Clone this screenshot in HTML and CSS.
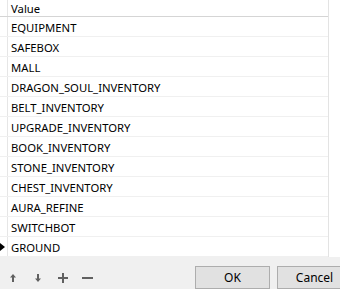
FILE: index.html
```html
<!DOCTYPE html>
<html>
<head>
    <link rel="stylesheet" href="styles.css">
</head>

<body>
    <div class="panel">
        <div class="grid">
            <div class="row head">
                <div class="marker"></div>
                <div class="cell">Value</div>
            </div>
            <div class="row"><div class="marker"></div><div class="cell">EQUIPMENT</div></div>
            <div class="row"><div class="marker"></div><div class="cell">SAFEBOX</div></div>
            <div class="row"><div class="marker"></div><div class="cell">MALL</div></div>
            <div class="row"><div class="marker"></div><div class="cell">DRAGON_SOUL_INVENTORY</div></div>
            <div class="row"><div class="marker"></div><div class="cell">BELT_INVENTORY</div></div>
            <div class="row"><div class="marker"></div><div class="cell">UPGRADE_INVENTORY</div></div>
            <div class="row"><div class="marker"></div><div class="cell">BOOK_INVENTORY</div></div>
            <div class="row"><div class="marker"></div><div class="cell">STONE_INVENTORY</div></div>
            <div class="row"><div class="marker"></div><div class="cell">CHEST_INVENTORY</div></div>
            <div class="row"><div class="marker"></div><div class="cell">AURA_REFINE</div></div>
            <div class="row"><div class="marker"></div><div class="cell">SWITCHBOT</div></div>
            <div class="row current"><div class="marker"><span class="arrow"></span></div><div class="cell">GROUND</div></div>
        </div>
    </div>

    <div class="toolbar">
        <div class="tools">
            <!-- move up / move down / add / remove -->
            <span class="tool">
                <svg width="6" height="8" viewBox="0 0 6 8"><path d="M3 0 L6 3.5 H4 V8 H2 V3.5 H0 Z" fill="#606060"/></svg>
            </span>
            <span class="tool">
                <svg width="6" height="8" viewBox="0 0 6 8"><path d="M3 8 L6 4.5 H4 V0 H2 V4.5 H0 Z" fill="#606060"/></svg>
            </span>
            <span class="tool">
                <svg width="10" height="10" viewBox="0 0 10 10"><path d="M0 5 H10 M5 0 V10" stroke="#606060" stroke-width="2"/></svg>
            </span>
            <span class="tool">
                <svg width="11" height="10" viewBox="0 0 11 10"><path d="M0 5 H11" stroke="#606060" stroke-width="2"/></svg>
            </span>
        </div>
        <div class="buttons">
            <button class="btn">OK</button>
            <button class="btn">Cancel</button>
        </div>
    </div>
</body>

</html>
```

FILE: styles.css
```css
body{
    margin: 0;
    width: 340px;
    height: 289px;
    overflow: hidden;
    font-family: "Noto Sans", "Liberation Sans", sans-serif;
    font-size: 11.3px;
    color: #000;
    background-color: #f0f0f0;
}
.panel{
    height: 257px;
    background-color: #fff;
}
.grid{
    width: 329px;
    height: 257px;
    border-right: 1px solid #e3e3e3;
    box-sizing: border-box;
}
.row{
    display: flex;
    height: 20px;
    border-bottom: 1px solid #f0f0f0;
    box-sizing: border-box;
}
.row.head{
    height: 17px;
    border-bottom-color: #d5d5d5;
}
.marker{
    width: 8px;
    flex: none;
    border-right: 1px solid #e6e6e6;
    box-sizing: border-box;
    display: flex;
    align-items: center;
}
.cell{
    flex: 1;
    padding: 1px 0 0 3px;
    line-height: 19px;
    white-space: nowrap;
}
.head .cell{
    padding-top: 0;
    line-height: 17px;
}
.arrow{
    width: 0;
    height: 0;
    border-top: 4px solid transparent;
    border-bottom: 4px solid transparent;
    border-left: 5px solid #000;
}
.toolbar{
    height: 32px;
    display: flex;
    justify-content: space-between;
}
.tools{
    display: flex;
    align-items: center;
    padding-top: 10px;
}
.tool{
    display: flex;
    width: 25px;
    justify-content: center;
}
.buttons{
    display: flex;
    gap: 7px;
    padding-top: 9px;
    margin-right: -12px;
}
.btn{
    width: 75px;
    height: 23px;
    font-family: inherit;
    font-size: 12px;
    color: #000;
    background-color: #e1e1e1;
    border: 1px solid #adadad;
    border-radius: 0;
    padding: 0;
}
```
